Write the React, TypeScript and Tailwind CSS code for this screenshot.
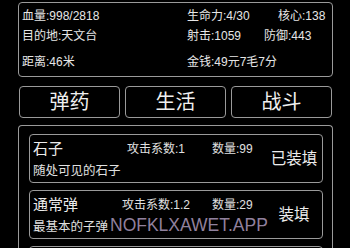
import React from 'react';

type Ammo = {
  name: string;
  nameW: number;
  attack: string;
  count: number;
  desc: string;
  action: string;
};

const ammoList: Ammo[] = [
  { name: '石子', nameW: 94, attack: '1', count: 99, desc: '随处可见的石子', action: '已装填' },
  { name: '通常弹', nameW: 89, attack: '1.2', count: 29, desc: '最基本的子弹', action: '装填' },
  { name: '', nameW: 94, attack: '', count: 0, desc: '', action: '' },
];

const tabs = ['弹药', '生活', '战斗'];

const AmmoCard = ({ ammo }: { ammo: Ammo }) => (
  <div className="h-[49px] shrink-0 rounded-[4px] border-[1.5px] border-[#9a9a9a] flex items-center pl-[3px] pr-[3px]">
    <div className="flex-1 flex flex-col self-start pt-[5px]">
      <div className="flex items-center h-[18px]">
        <span className="text-[15px] leading-[18px] text-[#ececec]" style={{ width: ammo.nameW }}>
          {ammo.name}
        </span>
        <span className="text-[12px] leading-[16px] text-[#e0e0e0]" style={{ width: 212 - 33 - ammo.nameW }}>
          {ammo.name && `攻击系数:${ammo.attack}`}
        </span>
        <span className="text-[12px] leading-[16px] text-[#e0e0e0]">
          {ammo.name && `数量:${ammo.count}`}
        </span>
      </div>
      <div className="text-[12.5px] leading-[16px] mt-[5px] text-[#e0e0e0]">{ammo.desc}</div>
    </div>
    <div className="text-[15.5px] w-[50px] text-center text-[#ececec]">{ammo.action}</div>
  </div>
);

export default function App() {
  return (
    <div
      className="relative w-[350px] h-[248px] overflow-hidden bg-black text-[#e6e6e6]"
      style={{ fontFamily: '"Liberation Sans", "Noto Sans CJK SC", sans-serif' }}
    >
      <div className="flex flex-col pl-[18px] pr-[17px] pt-[2px]">
        {/* Status panel */}
        <div className="h-[75px] rounded-[4px] border-[1.5px] border-[#9a9a9a] pl-[3px] text-[12px]">
          <div className="flex mt-[5px] leading-[16px]">
            <span className="w-[165px]">血量:998/2818</span>
            <span className="w-[91px]">生命力:4/30</span>
            <span>核心:138</span>
          </div>
          <div className="flex mt-[4px] leading-[16px]">
            <span className="w-[165px]">目的地:天文台</span>
            <span className="w-[77px]">射击:1059</span>
            <span>防御:443</span>
          </div>
          <div className="flex mt-[10px] leading-[16px]">
            <span className="w-[165px]">距离:46米</span>
            <span>金钱:49元7毛7分</span>
          </div>
        </div>

        {/* Tabs */}
        <div className="flex gap-[5px] mt-[9px] pl-[1px]">
          {tabs.map((tab) => (
            <button
              key={tab}
              className="w-[101px] h-[32px] rounded-[4px] border-[1.5px] border-[#9a9a9a] text-[20px] leading-none text-[#f0f0f0]"
            >
              {tab}
            </button>
          ))}
        </div>

        {/* Ammo list */}
        <div className="mt-[7px] h-[140px] rounded-t-[4px] border-[1.5px] border-b-0 border-[#9a9a9a] pl-[10px] pr-[9px] pt-[8px] flex flex-col gap-[7px]">
          {ammoList.map((ammo, i) => (
            <AmmoCard key={i} ammo={ammo} />
          ))}
        </div>
      </div>

      {/* Watermark */}
      <div className="absolute left-[110px] top-[215px] text-[17.5px] leading-[20px] text-[#a08fae] opacity-90 pointer-events-none">
        NOFKLXAWET.APP
      </div>
    </div>
  );
}
